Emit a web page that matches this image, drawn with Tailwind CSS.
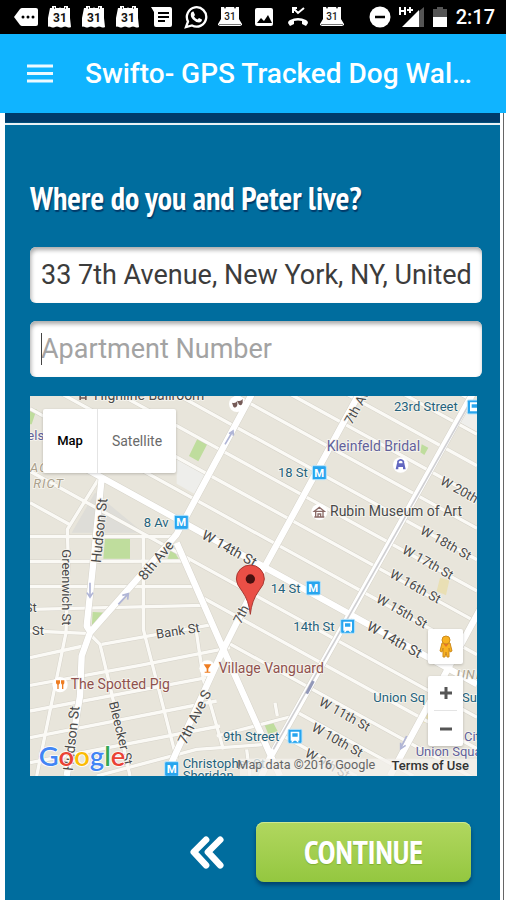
<!DOCTYPE html>
<html lang="en">
<head>
<meta charset="utf-8">
<meta name="viewport" content="width=device-width, initial-scale=1">
<title>Swifto- GPS Tracked Dog Walking</title>
<script src="https://cdn.jsdelivr.net/npm/@tailwindcss/browser@4"></script>
</head>
<body class="flex min-h-screen flex-col bg-white font-['Roboto','Liberation_Sans',sans-serif]">

<svg class="hidden" aria-hidden="true">
  <symbol id="cal" viewBox="0 0 24 24">
    <path fill="#fff" d="M2 3h2V1h4v2h8V1h4v2h2v10l1 9q-2 1-4 0t-4 0-4 0-4 0-4 0-4 0l1-9z"/>
    <path fill="#555" d="M6 2h1v2H6zM11 2h2v1h-2zM17 2h1v2h-1z"/>
    <text x="12" y="17" text-anchor="middle" font-size="12" font-weight="700" fill="#111">31</text>
  </symbol>
  <symbol id="cal2" viewBox="0 0 24 24">
    <path fill="#fff" d="M3 2h3l1 2 1-2h8l1 2 1-2h3v12l3 5v1l-2 1H2l-2-1v-1l3-5z"/>
    <path stroke="#777" d="M1 19.500h22"/>
    <text x="12" y="15" text-anchor="middle" font-size="10" font-weight="500" fill="#222">31</text>
  </symbol>
</svg>

<div class="flex h-[34px] shrink-0 items-center justify-between bg-black pr-[11px] pl-[14px] text-white">
  <div class="flex gap-[10px]">
    <svg class="size-6" viewBox="0 0 24 24"><path fill="#fff" d="M0 12l6-8q1-1 2-1h14q2 0 2 2v14q0 2-2 2H8q-1 0-2-1z"/><g fill="#000"><circle cx="9" cy="12" r="1.500"/><circle cx="14" cy="12" r="1.500"/><circle cx="19" cy="12" r="1.500"/></g></svg>
    <svg class="size-6"><use href="#cal"/></svg>
    <svg class="size-6"><use href="#cal"/></svg>
    <svg class="size-6"><use href="#cal"/></svg>
    <svg class="size-6" viewBox="0 0 24 24"><path fill="#fff" d="M1 2h19q2 0 2 2v16q0 2-2 2H6q-2 0-2-2V7z"/><path stroke="#000" stroke-width="2" d="M8 8h11M8 12h11M8 16h7"/></svg>
    <svg class="size-6" viewBox="0 0 24 24"><path fill="none" stroke="#fff" stroke-width="2.300" d="M2 22l2-5.500A9.700 9.700 0 1 1 8 20.500z"/><path fill="#fff" d="M7 8q1-2 2.500-1.500L11 10l-1 1.500q1 2 3.500 3L15 13l3 1.500q0 2.500-3 3-3 0-6-3T7 8z"/></svg>
    <svg class="size-6"><use href="#cal2"/></svg>
    <svg class="size-6" viewBox="0 0 24 24"><rect x="3" y="3" width="18" height="18" rx="2" fill="#fff"/><path fill="#000" d="M5 18l4-5 3 3 4-6 4 8z"/></svg>
    <svg class="size-6" viewBox="0 0 24 24"><path fill="none" stroke="#fff" stroke-width="2" d="M7 8V3h4M7 3l5 5 6-5"/><path fill="#fff" d="M2 18q0-2 2-3 8-4 16 0 2 1 2 3l-2 3-4-2v-3q-4-1-8 0v3l-4 2z"/></svg>
    <svg class="size-6"><use href="#cal2"/></svg>
  </div>
  <div class="flex items-center gap-2">
    <svg class="size-6" viewBox="0 0 24 24"><circle cx="12" cy="12" r="10.500" fill="#fff"/><path stroke="#000" stroke-width="2.500" d="M7 12h10"/></svg>
    <svg class="size-6 overflow-visible" viewBox="0 0 24 24"><path fill="#555" d="M24 2v20h-6V7z"/><path fill="#fff" d="M2 22L19 5v17z"/><path fill="none" stroke="#000" stroke-width="7" d="M-1 6h14"/><path fill="none" stroke="#fff" stroke-width="2" d="M0 2v8M5 2v8M0 6h5M7 5h6M10 2v6"/></svg>
    <svg class="h-6 w-4" viewBox="0 0 16 24"><path fill="#555" d="M1 4h4V2h6v2h4v9H1z"/><path fill="#fff" d="M1 12h14v10H1z"/></svg>
    <span class="text-[20px] leading-6 font-medium">2:17</span>
  </div>
</div>

<header class="flex h-[79px] shrink-0 items-center gap-8 bg-[#10b4ff] pr-8 pl-[27px] text-white">
  <button type="button" aria-label="Open menu" class="shrink-0">
    <svg class="h-5 w-[26px]" viewBox="0 0 26 20" stroke="#eefaff" stroke-width="3"><path d="M0 2h26M0 9.500h26M0 17h26"/></svg>
  </button>
  <h1 class="min-w-0 flex-1 truncate text-[28px] leading-9 font-medium">Swifto- GPS Tracked Dog Walking</h1>
</header>

<main class="mr-[3px] ml-[5px] flex flex-1 flex-col border-r-3 border-white bg-[#006d9e] shadow-[1px_0_0_#666]">
  <div class="h-[10px] border-b border-[#00507d] bg-[#003c6b]"></div>
  <div class="h-[2px] bg-[#e8f1f5]"></div>
  <form class="flex flex-col pt-[53px] pr-[18px] pl-[25px]" onsubmit="return false">
    <h2 class="font-['PT_Sans_Narrow','Liberation_Sans_Narrow','Open_Sans_Condensed','Liberation_Sans',sans-serif] text-[32px] leading-10 font-bold whitespace-nowrap text-white [text-shadow:1px_2px_1px_#003c6b]">Where do you and Peter live?</h2>
    <input aria-label="Address" type="text" value="33 7th Avenue, New York, NY, United" class="mt-[29px] h-[56px] w-full rounded-md bg-white px-[11px] text-[27px] text-[#3c3c3c] shadow-[inset_1px_3px_4px_#aaa] outline-none">
    <div class="relative mt-[18px]">
      <input aria-label="Apartment number" type="text" placeholder="Apartment Number" class="block h-[56px] w-full rounded-md bg-white px-[11px] text-[27px] text-[#3c3c3c] shadow-[inset_1px_3px_4px_#aaa] outline-none placeholder:text-[#a3a3a3]">
      <span class="absolute top-3 left-[11px] h-8 w-px bg-[#444]"></span>
    </div>

    <div class="relative mt-[19px] mr-[5px] overflow-hidden bg-[#e9e5dc]">
      <svg class="block w-full" viewBox="0 0 1341 1140" role="img" aria-label="Map of the West Village, New York">
        <rect width="1341" height="1140" fill="#e8e5db"/>
        <path fill="#deddd8" d="M195 290L340 410H125z"/>
        <path fill="#eeeeeb" d="M440 180l100 58-40 60-60-35zM1310 50h31v60l-50-30z"/>
        <g fill="#bfdd9d">
          <path d="M505 122l30 16-30 58-28-16zM225 428h75v60h-80zM425 455l22 35h-35zM188 648l45 2-48 48zM700 978l25-7 18 35-28 8zM1175 145l20 10-12 22-12-8zM0 40h20l-15 45H0z"/>
        </g>
        <path fill="#e9dfb4" d="M1230 545l28 8-10 45-28-12zM1180 950h20v30h-20z"/>
        <!-- side streets -->
        <g fill="none" stroke="#d6d3ca" stroke-width="13">
          <path d="M870-50L1341 209M700-50L1341 303M529-50L1341 397M358-50L1341 491M187-50L1341 585M16-50L1341 679M0 38L1341 776M0 226L1341 964M0 320L120 386M520 606L1341 1058M600 744L1341 1152M800 948L1150 1140M760 1020L980 1141M1040-50L1341 115M1211-50L1341 21"/>
          <path d="M0 422H440M0 497L480 495M0 572H490M0 640L520 628M0 705L170 712M215 745L550 685M0 785L160 750M0 868L330 808 600 755M0 945L530 845M0 1025L560 915M0 1100L570 990M200 1140L500 1060 710 1045M560 1020L790 960"/>
          <path d="M205 250L112 400 115 500 108 710 20 1140M340 422V700L440 1090M185 720L210 745 240 870 300 1140M498 700L520 850 580 1060M735 920L742 960M650 1060L660 1140"/>
        </g>
        <g fill="none" stroke="#fbfaf6" stroke-width="10">
          <path d="M870-50L1341 209M700-50L1341 303M529-50L1341 397M358-50L1341 491M187-50L1341 585M16-50L1341 679M0 38L1341 776M0 226L1341 964M0 320L120 386M520 606L1341 1058M600 744L1341 1152M800 948L1150 1140M760 1020L980 1141M1040-50L1341 115M1211-50L1341 21"/>
          <path d="M0 422H440M0 497L480 495M0 572H490M0 640L520 628M0 705L170 712M215 745L550 685M0 785L160 750M0 868L330 808 600 755M0 945L530 845M0 1025L560 915M0 1100L570 990M200 1140L500 1060 710 1045M560 1020L790 960"/>
          <path d="M205 250L112 400 115 500 108 710 20 1140M340 422V700L440 1090M185 720L210 745 240 870 300 1140M498 700L520 850 580 1060M735 920L742 960M650 1060L660 1140"/>
        </g>
        <!-- avenues -->
        <g fill="none" stroke="#d6d3ca" stroke-width="22" stroke-linejoin="round">
          <path d="M668-10L440 415 180 710 155 780 150 900 110 1140M1000-30L700 520 580 760 420 1110M1341-30L720 1085 690 1150M1350 640L1080 1140M440 440L580 760 725 1085 750 1140M215 245L190 500 170 690 185 715M120 192L1341 865"/>
        </g>
        <g fill="none" stroke="#fff" stroke-width="19" stroke-linejoin="round">
          <path d="M668-10L440 415 180 710 155 780 150 900 110 1140M1000-30L700 520 580 760 420 1110M1341-30L720 1085 690 1150M1350 640L1080 1140M440 440L580 760 725 1085 750 1140M215 245L190 500 170 690 185 715M120 192L1341 865"/>
        </g>
        <path fill="none" stroke="#cfcfd2" stroke-width="5" d="M1320 20L730 1060"/>
        <g fill="none" stroke="#b0b5d6" stroke-width="5">
          <path d="M585 145l22-37M597 113l12-8 1 14M180 560v40M171 590l9 14 9-14M265 625l28-30M277 598l18-5-2 18M1130 1020l-18 36M1112 1040v18l15-10"/>
          <path stroke="#9298b8" stroke-width="9" d="M850 855l-20 38"/>
        </g>
        <!-- street names -->
        <g fill="#494949" stroke="#f7f5ef" stroke-width="5" paint-order="stroke" font-size="39">
          <text transform="translate(212 502) rotate(-84)" font-size="42">Hudson St</text>
          <text transform="translate(96 460) rotate(90)">Greenwich St</text>
          <text transform="translate(344 556) rotate(-50)" font-size="42">8th Ave</text>
          <text transform="translate(512 426) rotate(29)" font-size="42">W 14th St</text>
          <text transform="translate(1007 700) rotate(29)" font-size="42">W 14th St</text>
          <text transform="translate(965 88) rotate(-61)">7th Ave</text>
          <text transform="translate(632 686) rotate(-62)">7th</text>
          <text transform="translate(468 1048) rotate(-64)" font-size="42">7th Ave S</text>
          <text transform="translate(380 728) rotate(-9)">Bank St</text>
          <text x="6" y="718">St</text><text x="-16" y="649">St</text>
          <text transform="translate(128 1126) rotate(-84)" font-size="42">Hudson St</text>
          <text transform="translate(236 920) rotate(76)">Bleecker St</text>
          <text transform="translate(1228 263) rotate(29)">W 20th St</text>
          <text transform="translate(1168 412) rotate(29)">W 18th St</text>
          <text transform="translate(1114 470) rotate(29)">W 17th St</text>
          <text transform="translate(1076 542) rotate(29)">W 16th St</text>
          <text transform="translate(1036 617) rotate(29)">W 15th St</text>
          <text transform="translate(864 926) rotate(29)">W 11th St</text>
          <text transform="translate(842 1003) rotate(29)">W 10th St</text>
          <text transform="translate(822 1080) rotate(29)">W 9th St</text>
          <text x="192" y="12" font-size="42">Highline Ballroom</text>
          <text x="900" y="361" font-size="42">Rubin Museum of Art</text>
        </g>
        <g stroke="#f7f5ef" stroke-width="5" paint-order="stroke" font-size="39">
          <g fill="#aaa08c" font-style="italic" letter-spacing="3"><text x="0" y="227">AC</text><text x="10" y="276">RICT</text><text x="1280" y="850">UNI</text></g>
          <g fill="#62619a"><text x="-8" y="131">els</text><text x="890" y="166" font-size="42">Kleinfeld Bridal</text><text x="1157" y="1079">Union Square</text><text x="1302" y="1036">Cit</text></g>
          <g fill="#8f514d" font-size="42"><text x="122" y="879">The Spotted Pig</text><text x="566" y="831">Village Vanguard</text></g>
          <g fill="#25627c"><text x="1092" y="46">23rd Street</text><text x="744" y="243">18 St</text><text x="341" y="392">8 Av</text><text x="722" y="590">14 St</text><text x="790" y="705">14th St</text><text x="579" y="1035">9th Street</text><text x="1030" y="917">Union Sq</text><text x="1296" y="917">Sub</text><text x="458" y="1115">Christopher St</text><text x="458" y="1153">Sheridan</text></g>
        </g>
        <!-- station badges -->
        <g fill="#27a5ef" stroke="#b9e4fb" stroke-width="3">
          <rect x="433" y="358" width="42" height="42" rx="4"/><rect x="847" y="209" width="42" height="42" rx="4"/><rect x="829" y="555" width="42" height="42" rx="4"/><rect x="404" y="1097" width="42" height="44" rx="4"/>
          <rect x="932" y="670" width="42" height="42" rx="4"/><rect x="774" y="1000" width="42" height="42" rx="4"/><rect x="1312" y="12" width="42" height="42" rx="4"/>
        </g>
        <g fill="#fff" font-size="34" font-weight="700" text-anchor="middle"><text x="454" y="391">M</text><text x="868" y="242">M</text><text x="850" y="588">M</text><text x="425" y="1131">M</text></g>
        <g fill="#fff">
          <path d="M940 677h26v27h-5l4 5h-5l-4-5h-6l-4 5h-5l4-5h-5zM782 1007h26v27h-5l4 5h-5l-4-5h-6l-4 5h-5l4-5h-5zM1320 19h26v27h-26z"/>
        </g>
        <path fill="#27a5ef" d="M945 682h16v10h-16zM787 1012h16v10h-16zM1325 25h20v10h-20z"/>
        <!-- places -->
        <g fill="#fff"><circle cx="621" cy="24" r="24"/><circle cx="868" cy="348" r="24"/><circle cx="1112" cy="207" r="23"/><circle cx="90" cy="866" r="23"/><circle cx="532" cy="817" r="24"/></g>
        <path fill="#765b58" d="M606 20q10 4 16-5v12q-4 12-12 5zM622 14q10 4 16-5v11q-4 12-12 5zM148 8V0h5v4h12V0h5v12h-5V8h-12v4h-5z"/>
        <path fill="none" stroke="#8a6a66" stroke-width="4" d="M853 346l15-12 15 12zM857 348v15M879 348v15M853 363h30M864 363v-9h8v9"/>
        <path fill="none" stroke="#6267c0" stroke-width="5" d="M1104 204v-8q8-9 16 0v8"/><path fill="#6267c0" d="M1101 202h22l4 18h-8v-7h-14v7h-8z"/>
        <path fill="#ee7d22" d="M78 853h12v9l-4 4v13h-4v-13l-4-4zM93 853h10v9l-3 4v13h-4v-13l-3-4zM521 805h23l-9 13v9h6v3h-17v-3h6v-9z"/>
        <!-- marker -->
        <path fill="#ea4f46" stroke="#a83a34" stroke-width="3" d="M661 655Q657 614 636 585 619 565 619 549A42 42 0 0 1 703 549Q703 565 686 585 665 614 661 655Z"/>
        <circle cx="661" cy="549" r="14" fill="#471110"/>
        <rect x="630" y="1088" width="711" height="52" fill="#f4f2ed" fill-opacity=".75"/>
        <!-- logo -->
        <text x="26" y="1110" font-family="Lato, Roboto, sans-serif" font-size="82" font-weight="600" stroke="#fff" stroke-width="5" paint-order="stroke"><tspan fill="#4285f4">G</tspan><tspan fill="#ea4335">o</tspan><tspan fill="#fbbc05">o</tspan><tspan fill="#4285f4">g</tspan><tspan fill="#34a853">l</tspan><tspan fill="#ea4335">e</tspan></text>
        <text x="622" y="1120" font-size="38" fill="#666">Map data ©2016 Google</text>
      </svg>
      <div class="absolute top-[13px] left-[13px] flex h-16 rounded-xs bg-white text-[13px] shadow-[0_1px_3px_#0003]">
        <button type="button" class="w-[55px] border-r border-[#e4e4e4] font-medium text-black">Map</button>
        <button type="button" class="w-[78px] text-[14px] text-[#6a6a6a]">Satellite</button>
      </div>
      <div class="absolute right-[14px] bottom-[30px] flex w-[35px] flex-col gap-3">
        <button type="button" aria-label="Street View" class="flex h-[35px] items-center justify-center rounded-xs bg-white shadow-[0_1px_3px_#0003]">
          <svg class="h-6 w-4" viewBox="0 0 16 24"><g fill="#f9b220" stroke="#ce8b1d"><path d="M4 8h8l2 8-2 1-1-4v9H9l-1-5-1 5H5v-9l-1 4-2-1z"/><circle cx="8" cy="5" r="4"/></g><path d="M5.500 9l2.500 3 2.500-3z" fill="#e0762a"/></svg>
        </button>
        <div class="flex flex-col rounded-xs bg-white px-[6px] shadow-[0_1px_3px_#0003]">
          <button type="button" aria-label="Zoom in" class="flex h-[35px] items-center justify-center border-b border-[#e4e4e4]"><svg class="size-3" viewBox="0 0 12 12" stroke="#555" stroke-width="3"><path d="M0 6h12M6 0v12"/></svg></button>
          <button type="button" aria-label="Zoom out" class="flex h-[35px] items-center justify-center"><svg class="size-3" viewBox="0 0 12 12" stroke="#555" stroke-width="3"><path d="M0 6h12"/></svg></button>
        </div>
      </div>
      <a href="#" class="absolute right-2 bottom-[2px] text-[13px] leading-4 font-medium text-[#333]">Terms of Use</a>
    </div>

    <div class="mt-[46px] mr-[11px] mb-4 flex items-center justify-end gap-[32px]">
      <button type="button" aria-label="Back">
        <svg class="h-[34px] w-[34px]" viewBox="0 0 36 36" fill="none" stroke="#fff" stroke-width="7" stroke-linecap="round" stroke-linejoin="round"><path d="M17 5L4 18 17 32M32 5L19 18 32 32"/></svg>
      </button>
      <button type="submit" class="h-[60px] w-[215px] rounded-lg bg-linear-to-b from-[#b1d75f] to-[#94c73f] font-['PT_Sans_Narrow','Liberation_Sans_Narrow','Open_Sans_Condensed','Liberation_Sans',sans-serif] text-[32px] font-bold text-white shadow-[0_3px_4px_#00406b,inset_0_1px_0_#cde894] [text-shadow:0_1px_1px_#7fae32]">CONTINUE</button>
    </div>
  </form>
</main>
</body>
</html>
